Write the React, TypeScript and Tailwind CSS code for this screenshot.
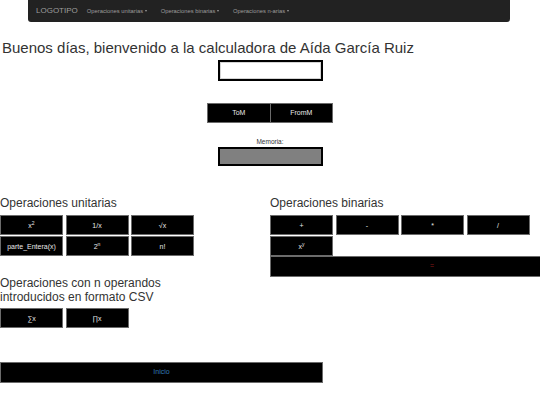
import React from "react";

const font = { fontFamily: '"Liberation Sans", Arial, sans-serif' };

function Caret() {
  return (
    <span className="ml-[1.5px] inline-block h-0 w-0 border-x-[1.5px] border-t-[2px] border-x-transparent border-t-[#9d9d9d] align-middle" />
  );
}

function NavItem({ label }: { label: string }) {
  return (
    <span className="flex items-center text-[5.8px] text-[#9d9d9d]">
      {label}
      <Caret />
    </span>
  );
}

function Btn({
  children,
  className = "",
}: {
  children: React.ReactNode;
  className?: string;
}) {
  return (
    <div
      className={`flex h-[20px] w-[63px] items-center justify-center border border-[#6b6b6b] bg-black text-[7px] leading-none text-[#e8e8e8] ${className}`}
    >
      {children}
    </div>
  );
}

function Sup({ children }: { children: React.ReactNode }) {
  return <sup className="relative -top-[2px] text-[5px] align-baseline">{children}</sup>;
}

export default function App() {
  return (
    <div
      className="h-[405px] w-[540px] overflow-hidden bg-white text-[#333] antialiased"
      style={font}
    >
      {/* top navigation bar */}
      <nav className="mx-[28px] flex h-[22px] w-[482px] items-center rounded-b-[3px] bg-[#222]">
        <span className="ml-[8px] text-[8px] text-[#9d9d9d]">LOGOTIPO</span>
        <div className="ml-[9px] flex gap-[14px]">
          <NavItem label="Operaciones unitarias" />
          <NavItem label="Operaciones binarias" />
          <NavItem label="Operaciones n-arias" />
        </div>
      </nav>

      <h1 className="ml-[2px] mt-[17px] text-[15px] font-normal leading-[17px]">
        Buenos días, bienvenido a la calculadora de Aída García Ruiz
      </h1>

      {/* display */}
      <div className="mx-auto mt-[4px] h-[21px] w-[105px] border-2 border-black bg-white shadow-[inset_0_0_0_1px_#d4d4d4]" />

      {/* memory buttons */}
      <div className="mx-auto mt-[22px] flex w-[126px]">
        <div className="flex h-[20px] flex-1 items-center justify-center border border-[#6b6b6b] bg-black text-[7px] text-[#e8e8e8]">
          ToM
        </div>
        <div className="flex h-[20px] flex-1 items-center justify-center border border-l-0 border-[#6b6b6b] bg-black text-[7px] text-[#e8e8e8]">
          FromM
        </div>
      </div>

      <div className="mt-[14px] text-center text-[6.5px] leading-[9px]">Memoria:</div>
      <div className="mx-auto mt-[1px] h-[19px] w-[105px] border-2 border-black bg-[#808080]" />

      <div className="mt-[30px] flex">
        {/* unary + n-ary */}
        <div className="w-[270px] shrink-0">
          <h3 className="text-[12px] font-normal leading-[14px]">Operaciones unitarias</h3>
          <div className="mt-[5px] grid w-fit grid-cols-[63px_63px_63px] gap-x-[2.5px] gap-y-[1px]">
            <Btn>
              x<Sup>2</Sup>
            </Btn>
            <Btn>1/x</Btn>
            <Btn>√x</Btn>
            <Btn>parte_Entera(x)</Btn>
            <Btn>
              2<Sup>n</Sup>
            </Btn>
            <Btn>n!</Btn>
          </div>

          <h3 className="mt-[20px] max-w-[185px] text-[12px] font-normal leading-[14px]">
            Operaciones con n operandos introducidos en formato CSV
          </h3>
          <div className="mt-[4px] flex gap-x-[2.5px]">
            <Btn>∑x</Btn>
            <Btn>∏x</Btn>
          </div>
        </div>

        {/* binary */}
        <div className="w-[324px] shrink-0">
          <h3 className="text-[12px] font-normal leading-[14px]">Operaciones binarias</h3>
          <div className="mt-[5px] grid w-fit grid-cols-[63px_63px_63px_63px] gap-x-[2.5px] gap-y-[1px]">
            <Btn>+</Btn>
            <Btn>-</Btn>
            <Btn>*</Btn>
            <Btn>/</Btn>
            <Btn>
              x<Sup>y</Sup>
            </Btn>
          </div>
          <div className="flex h-[21px] w-[324px] items-center justify-center border border-[#6b6b6b] bg-black text-[7px] text-[#8b1a1a]">
            =
          </div>
        </div>
      </div>

      <div className="mt-[34px] flex h-[21px] w-[323px] items-center justify-center border border-[#6b6b6b] bg-black text-[7px] text-[#337ab7]">
        Inicio
      </div>
    </div>
  );
}
